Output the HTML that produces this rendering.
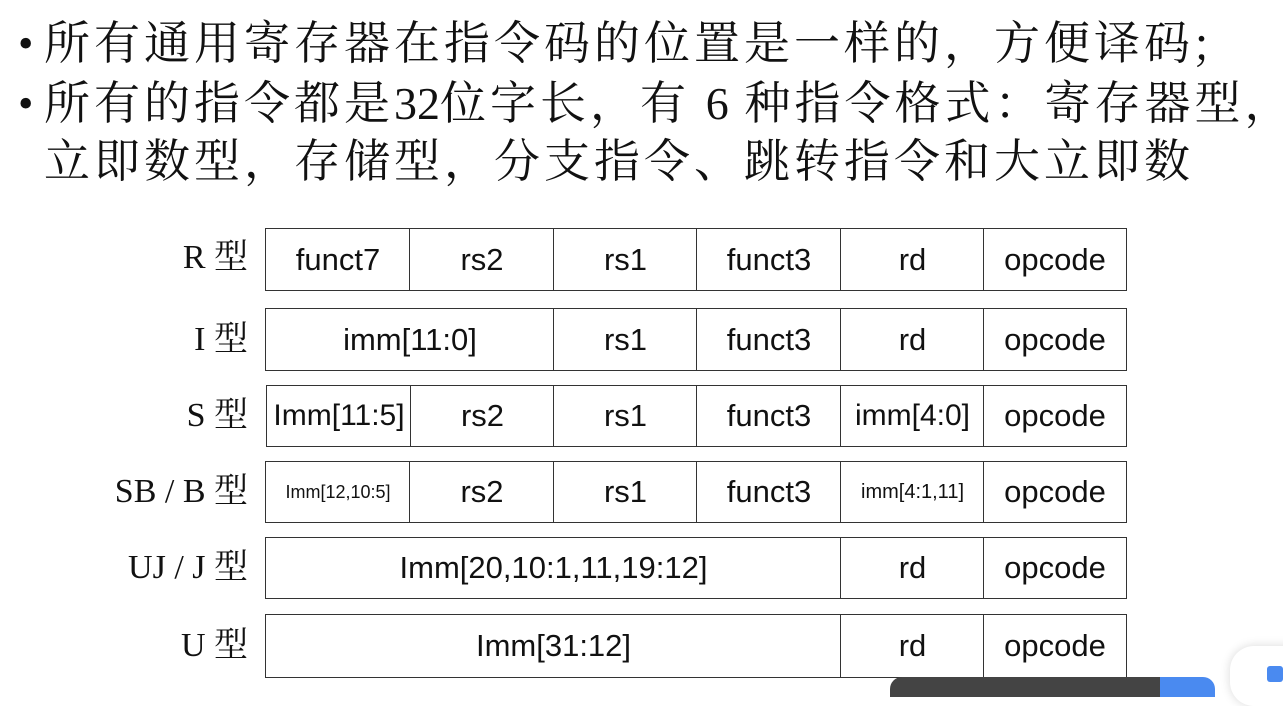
<!DOCTYPE html>
<html><head><meta charset="utf-8"><style>
body{margin:0;width:1283px;height:682px;background:#fff;position:relative;overflow:hidden;font-family:"Liberation Sans","Noto Sans CJK SC",sans-serif;}
.t{position:absolute;left:44px;font-family:"Noto Serif CJK SC",serif;font-size:46px;line-height:60px;color:#111;white-space:nowrap;letter-spacing:4px}
.t .n{font-family:"Liberation Serif",serif;letter-spacing:0}
.b{position:absolute;left:18px;font-family:"Liberation Serif",serif;font-size:44px;line-height:60px;color:#111}
.l{position:absolute;right:1035px;font-family:"Liberation Serif","Noto Serif CJK SC",serif;font-size:34px;color:#111;white-space:nowrap;line-height:40px}
.c{position:absolute;box-sizing:border-box;border:1.5px solid #333;display:flex;align-items:center;justify-content:center;font-size:31px;color:#111;white-space:nowrap;background:#fff}
</style></head><body>
<div class="b" style="top:14px">•</div>
<div class="b" style="top:74px">•</div>
<div class="t" style="top:10px">所有通用寄存器在指令码的位置是一样的，方便译码;</div>
<div class="t" style="top:70px">所有的指令都是<span class="n">32</span>位字长，有 <span class="n">6</span> 种指令格式：寄存器型，</div>
<div class="t" style="top:128px">立即数型，存储型，分支指令、跳转指令和大立即数</div>

<div class="l" style="top:238px">R 型</div>
<div class="l" style="top:320px">I 型</div>
<div class="l" style="top:396px">S 型</div>
<div class="l" style="top:472px">SB / B 型</div>
<div class="l" style="top:548px">UJ / J 型</div>
<div class="l" style="top:626px">U 型</div>

<div class="c" style="left:265px;top:228px;width:146px;height:63px">funct7</div>
<div class="c" style="left:409px;top:228px;width:146px;height:63px">rs2</div>
<div class="c" style="left:553px;top:228px;width:145px;height:63px">rs1</div>
<div class="c" style="left:696px;top:228px;width:146px;height:63px">funct3</div>
<div class="c" style="left:840px;top:228px;width:145px;height:63px">rd</div>
<div class="c" style="left:983px;top:228px;width:144px;height:63px">opcode</div>

<div class="c" style="left:265px;top:308px;width:290px;height:63px">imm[11:0]</div>
<div class="c" style="left:553px;top:308px;width:145px;height:63px">rs1</div>
<div class="c" style="left:696px;top:308px;width:146px;height:63px">funct3</div>
<div class="c" style="left:840px;top:308px;width:145px;height:63px">rd</div>
<div class="c" style="left:983px;top:308px;width:144px;height:63px">opcode</div>

<div class="c" style="left:266px;top:385px;width:146px;height:62px;font-size:30px">Imm[11:5]</div>
<div class="c" style="left:410px;top:385px;width:145px;height:62px">rs2</div>
<div class="c" style="left:553px;top:385px;width:145px;height:62px">rs1</div>
<div class="c" style="left:696px;top:385px;width:146px;height:62px">funct3</div>
<div class="c" style="left:840px;top:385px;width:145px;height:62px;font-size:30px">imm[4:0]</div>
<div class="c" style="left:983px;top:385px;width:144px;height:62px">opcode</div>

<div class="c" style="left:265px;top:461px;width:146px;height:62px;font-size:18px">Imm[12,10:5]</div>
<div class="c" style="left:409px;top:461px;width:146px;height:62px">rs2</div>
<div class="c" style="left:553px;top:461px;width:145px;height:62px">rs1</div>
<div class="c" style="left:696px;top:461px;width:146px;height:62px">funct3</div>
<div class="c" style="left:840px;top:461px;width:145px;height:62px;font-size:20px">imm[4:1,11]</div>
<div class="c" style="left:983px;top:461px;width:144px;height:62px">opcode</div>

<div class="c" style="left:265px;top:537px;width:577px;height:62px">Imm[20,10:1,11,19:12]</div>
<div class="c" style="left:840px;top:537px;width:145px;height:62px">rd</div>
<div class="c" style="left:983px;top:537px;width:144px;height:62px">opcode</div>

<div class="c" style="left:265px;top:614px;width:577px;height:64px">Imm[31:12]</div>
<div class="c" style="left:840px;top:614px;width:145px;height:64px">rd</div>
<div class="c" style="left:983px;top:614px;width:144px;height:64px">opcode</div>

<div style="position:absolute;left:890px;top:677px;width:320px;height:20px;background:#444;border-radius:12px 12px 0 0"></div>
<div style="position:absolute;left:1160px;top:677px;width:55px;height:20px;background:#4a8af0;border-radius:0 12px 0 0"></div>
<div style="position:absolute;left:1230px;top:646px;width:80px;height:60px;background:#fff;border-radius:24px;box-shadow:0 0 10px rgba(0,0,0,.15)"></div>
<div style="position:absolute;left:1267px;top:666px;width:16px;height:16px;background:#4a8af0;border-radius:3px"></div>
</body></html>
